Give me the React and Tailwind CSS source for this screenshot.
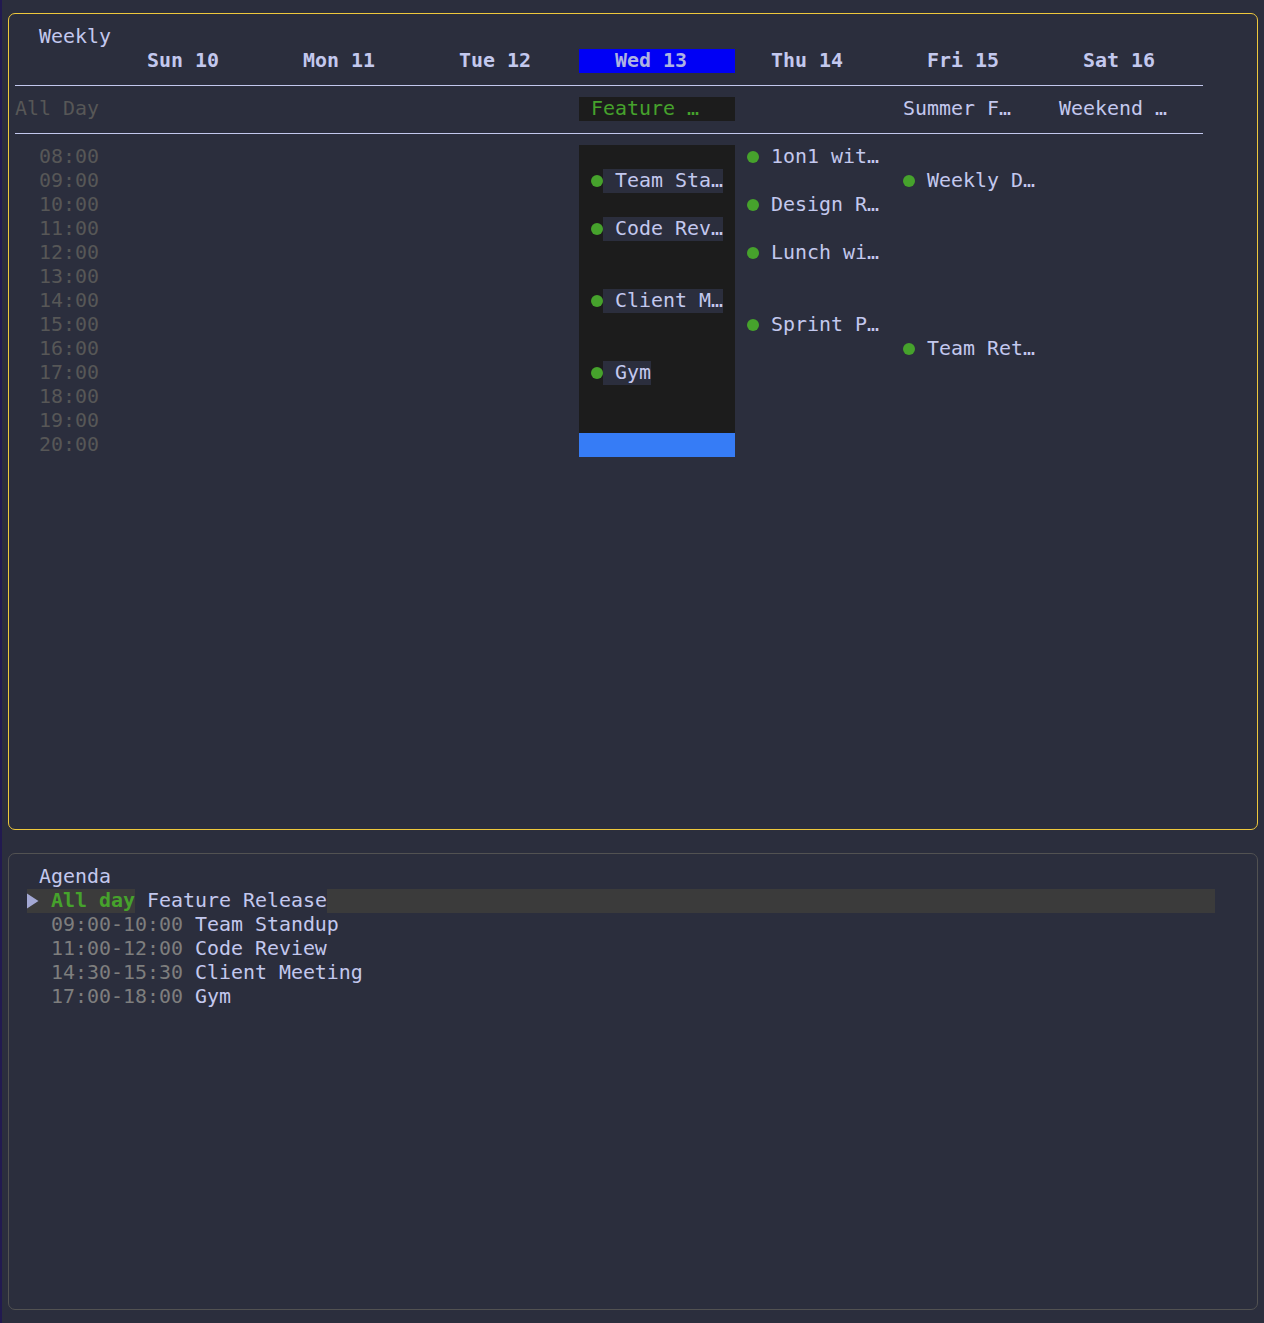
import React from 'react';

const days = ['Sun 10', 'Mon 11', 'Tue 12', 'Wed 13', 'Thu 14', 'Fri 15', 'Sat 16'];
const TODAY = 3;

const allDay = {
  3: { text: 'Feature …', green: true },
  5: { text: 'Summer F…' },
  6: { text: 'Weekend …' },
};

const hours = [8, 9, 10, 11, 12, 13, 14, 15, 16, 17, 18, 19, 20];

const events = {
  3: { 9: 'Team Sta…', 11: 'Code Rev…', 14: 'Client M…', 17: 'Gym' },
  4: { 8: '1on1 wit…', 10: 'Design R…', 12: 'Lunch wi…', 15: 'Sprint P…' },
  5: { 9: 'Weekly D…', 16: 'Team Ret…' },
};

const agenda = [
  { time: '09:00-10:00', title: 'Team Standup' },
  { time: '11:00-12:00', title: 'Code Review' },
  { time: '14:30-15:30', title: 'Client Meeting' },
  { time: '17:00-18:00', title: 'Gym' },
];

const pad = (n) => String(n).padStart(2, '0') + ':00';

function Rule() {
  return (
    <div className="h-[24px] pt-[12px]">
      <div className="h-px w-[1188px] bg-[#c3c8ee]" />
    </div>
  );
}

function EventChip({ text }) {
  return (
    <div className="flex h-[24px] items-center pl-[12px]">
      <div className="flex w-[12px] justify-center">
        <div className="h-[12px] w-[12px] rounded-full bg-[#46a22c]" />
      </div>
      <span className="whitespace-pre bg-[#2b2e3d]">{' ' + text}</span>
    </div>
  );
}

export default function App() {
  return (
    <div className="flex h-[1323px] w-[1264px] bg-[#2b2e3d] font-['DejaVu_Sans_Mono','Liberation_Mono',monospace] text-[19.93px] leading-[24px] text-[#c3c8ee]">
      <div className="w-[2px] bg-[#221a50]" />
      <div className="flex flex-col pl-[6px]">
        {/* Weekly panel */}
        <div className="mt-[13px] h-[817px] w-[1250px] rounded-[7px] border border-[#eec83c] pl-[6px] pt-[11px]">
          <div className="h-[24px] pl-[24px]">Weekly</div>
          <div className="flex h-[24px]">
            <div className="w-[96px]" />
            {days.map((d, i) => (
              <div
                key={d}
                className={`w-[156px] whitespace-pre pl-[36px] font-bold ${i === TODAY ? 'bg-[#0000f5] text-[#adb2e2]' : ''}`}
              >
                {d}
              </div>
            ))}
          </div>
          <Rule />
          <div className="flex h-[24px]">
            <div className="w-[96px] text-[#575757]">All Day</div>
            {days.map((d, i) => (
              <div
                key={d}
                className={`w-[156px] whitespace-pre pl-[12px] ${i === TODAY ? 'bg-[#1c1c1c]' : ''} ${allDay[i]?.green ? 'text-[#46a22c]' : ''}`}
              >
                {allDay[i]?.text}
              </div>
            ))}
          </div>
          <Rule />
          {hours.map((h) => (
            <div key={h} className="flex h-[24px]">
              <div className="w-[96px] pl-[24px] text-[#575757]">{pad(h)}</div>
              {days.map((d, i) => {
                let bg = '';
                if (i === TODAY) bg = h === 20 ? 'bg-[#367cf6]' : 'bg-[#1c1c1c]';
                const ev = events[i]?.[h];
                return (
                  <div key={d} className={`w-[156px] ${bg}`}>
                    {ev && <EventChip text={ev} />}
                  </div>
                );
              })}
            </div>
          ))}
        </div>

        {/* Agenda panel */}
        <div className="mt-[23px] h-[457px] w-[1250px] rounded-[7px] border border-[#525252] pl-[6px] pt-[11px]">
          <div className="h-[24px] pl-[24px]">Agenda</div>
          <div className="flex h-[24px] whitespace-pre">
            <span className="w-[12px]" />
            <span className="flex bg-[#3b3b3b]">
              <svg width="12" height="24" viewBox="0 0 12 24" className="text-[#a3a8d4]">
                <polygon points="0,4.5 11.5,12 0,19.5" fill="currentColor" />
              </svg>
              <span> </span>
              <span className="font-bold text-[#46a22c]">All day</span>
            </span>
            <span> Feature Release</span>
            <span className="w-[888px] bg-[#3b3b3b]" />
          </div>
          {agenda.map((a) => (
            <div key={a.time} className="flex h-[24px] whitespace-pre pl-[36px]">
              <span className="text-[#7e7e7e]">{a.time}</span>
              <span>{' ' + a.title}</span>
            </div>
          ))}
        </div>
      </div>
    </div>
  );
}
